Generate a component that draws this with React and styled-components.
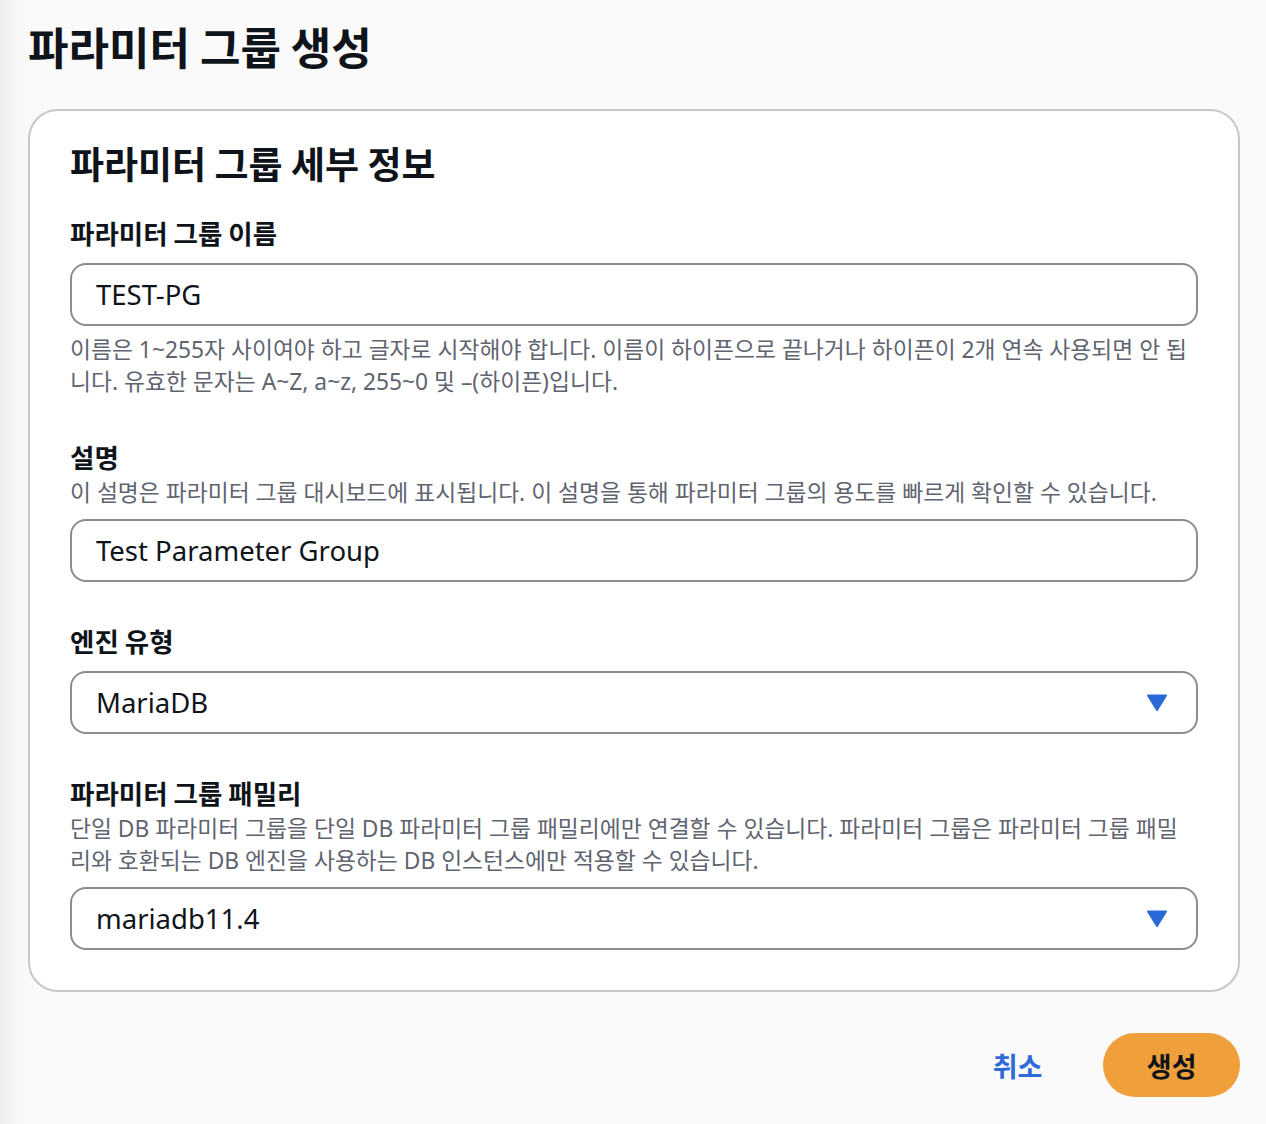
import React from "react";
import styled, { createGlobalStyle } from "styled-components";

const GlobalStyle = createGlobalStyle`
  html, body {
    margin: 0;
    padding: 0;
  }
  body {
    background: linear-gradient(to right, #ececec 0px, #f8f8f8 18px, #fafafa 40px);
    font-family: "Noto Sans", "Noto Sans CJK KR", sans-serif;
    color: #0f141a;
  }
`;

const Page = styled.main`
  padding: 16px 26px 28px 28px;
  display: flex;
  flex-direction: column;
`;

const PageTitle = styled.h1`
  margin: 0 0 33px 0;
  font-size: 44px;
  line-height: 60px;
  font-weight: 700;
  font-family: "Noto Sans CJK KR", sans-serif;
`;

const Card = styled.section`
  background: #ffffff;
  border: 2px solid #c6c6cd;
  border-radius: 30px;
  padding: 28px 40px 40px 40px;
  display: flex;
  flex-direction: column;
`;

const CardTitle = styled.h2`
  margin: 0 0 28px 0;
  font-size: 37px;
  line-height: 48px;
  font-weight: 700;
  font-family: "Noto Sans CJK KR", sans-serif;
`;

const Fields = styled.div`
  display: flex;
  flex-direction: column;
  gap: 41px;
`;

const Field = styled.div`
  display: flex;
  flex-direction: column;
`;

const Label = styled.label`
  font-size: 26.5px;
  line-height: 36px;
  font-weight: 700;
  font-family: "Noto Sans CJK KR", sans-serif;
  margin-bottom: ${p => (p.$hasDesc ? "2px" : "12px")};
`;

const Description = styled.p`
  margin: 0 0 10px 0;
  font-size: 22.8px;
  line-height: 32px;
  color: #5f6470;
`;

const Hint = styled.p`
  margin: 8px 0 0 0;
  font-size: 22.8px;
  line-height: 32px;
  color: #5f6470;
`;

const Box = styled.div`
  height: 63px;
  box-sizing: border-box;
  border: 2px solid #8c8c94;
  border-radius: 16px;
  background: #ffffff;
  padding: 0 28px 0 24px;
  display: flex;
  align-items: center;
  justify-content: space-between;
  font-size: 27.5px;
  color: #0f141a;
`;

const Caret = styled.svg`
  width: 22px;
  height: 18px;
  flex: none;
`;

const Footer = styled.div`
  display: flex;
  justify-content: flex-end;
  align-items: center;
  gap: 41px;
  margin-top: 41px;
`;

const LinkButton = styled.button`
  border: none;
  background: none;
  padding: 0 20px;
  font-family: "Noto Sans CJK KR", sans-serif;
  font-size: 27px;
  font-weight: 700;
  color: #2f6ad9;
  cursor: pointer;
`;

const PrimaryButton = styled.button`
  border: none;
  background: #f0a03a;
  height: 64px;
  padding: 0 43.5px;
  border-radius: 32px;
  font-family: "Noto Sans CJK KR", sans-serif;
  font-size: 27px;
  font-weight: 700;
  color: #0f141a;
  cursor: pointer;
`;

function DownCaret() {
  return (
    <Caret viewBox="0 0 22 18">
      <path d="M2 1.5 H20 L11 16 Z" fill="#2a6ad8" stroke="#2a6ad8" strokeWidth="2" strokeLinejoin="round" />
    </Caret>
  );
}

const Select = ({ value }) => (
  <Box>
    <span>{value}</span>
    <DownCaret />
  </Box>
);

export default function App() {
  return (
    <>
      <GlobalStyle />
      <Page>
        <PageTitle>파라미터 그룹 생성</PageTitle>
        <Card>
          <CardTitle>파라미터 그룹 세부 정보</CardTitle>
          <Fields>
            <Field>
              <Label>파라미터 그룹 이름</Label>
              <Box>TEST-PG</Box>
              <Hint>
                이름은 1~255자 사이여야 하고 글자로 시작해야 합니다. 이름이 하이픈으로 끝나거나 하이픈이 2개 연속 사용되면 안 됩니다. 유효한 문자는 A~Z, a~z, 255~0 및 –(하이픈)입니다.
              </Hint>
            </Field>
            <Field>
              <Label $hasDesc>설명</Label>
              <Description>
                이 설명은 파라미터 그룹 대시보드에 표시됩니다. 이 설명을 통해 파라미터 그룹의 용도를 빠르게 확인할 수 있습니다.
              </Description>
              <Box>Test Parameter Group</Box>
            </Field>
            <Field>
              <Label>엔진 유형</Label>
              <Select value="MariaDB" />
            </Field>
            <Field>
              <Label $hasDesc>파라미터 그룹 패밀리</Label>
              <Description>
                단일 DB 파라미터 그룹을 단일 DB 파라미터 그룹 패밀리에만 연결할 수 있습니다. 파라미터 그룹은 파라미터 그룹 패밀리와 호환되는 DB 엔진을 사용하는 DB 인스턴스에만 적용할 수 있습니다.
              </Description>
              <Select value="mariadb11.4" />
            </Field>
          </Fields>
        </Card>
        <Footer>
          <LinkButton>취소</LinkButton>
          <PrimaryButton>생성</PrimaryButton>
        </Footer>
      </Page>
    </>
  );
}
